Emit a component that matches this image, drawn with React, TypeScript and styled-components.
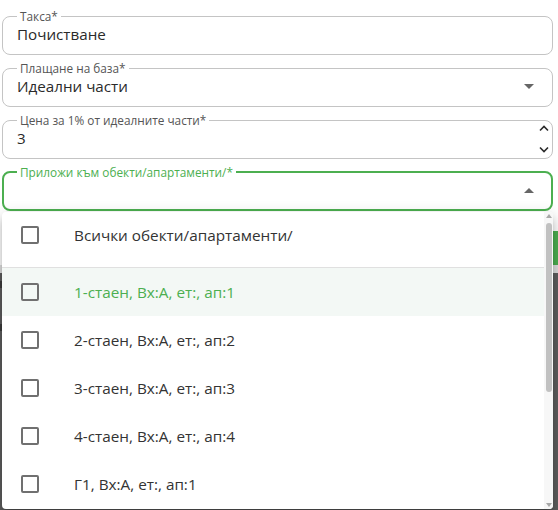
import styled, { createGlobalStyle } from "styled-components";

const GlobalStyle = createGlobalStyle`
  html, body {
    margin: 0;
    padding: 0;
    background: #ffffff;
    font-family: "Open Sans", "Noto Sans", sans-serif;
    overflow: hidden;
  }
`;

const Page = styled.div`
  position: relative;
  width: 558px;
  height: 510px;
  overflow: hidden;
  background: #ffffff;
`;

const Form = styled.div`
  display: flex;
  flex-direction: column;
  gap: 7px;
  padding: 10px 5px 0 2px;
`;

const Field = styled.fieldset<{ $focused?: boolean }>`
  margin: 0;
  padding: 0 ${(p) => (p.$focused ? "13px" : "14px")};
  min-width: 0;
  border: ${(p) => (p.$focused ? "2px solid #4caf50" : "1px solid #c4c4c4")};
  border-radius: 8px;
  height: 45px;
  box-sizing: border-box;
`;

const Legend = styled.legend<{ $focused?: boolean }>`
  padding: 0 3px;
  font-size: 11.8px;
  line-height: 12px;
  color: ${(p) => (p.$focused ? "#4caf50" : "#555555")};
`;

const Control = styled.div`
  display: flex;
  align-items: center;
  height: 26px;
  margin-top: -1px;
`;

const Value = styled.span`
  flex: 1;
  font-size: 15.2px;
  color: #2a2a2a;
  white-space: nowrap;
`;

const Triangle = styled.span<{ $up?: boolean }>`
  width: 0;
  height: 0;
  margin-right: 4px;
  border-left: 5px solid transparent;
  border-right: 5px solid transparent;
  ${(p) =>
    p.$up
      ? "border-bottom: 5px solid #666666;"
      : "border-top: 5px solid #666666;"}
`;

const Spinner = styled.div`
  display: flex;
  flex-direction: column;
  justify-content: space-between;
  height: 30px;
  margin-right: -12px;
  margin-top: 1px;
`;

const Backdrop = styled.div`
  display: flex;
  flex-direction: column;
  margin-top: 20px;
`;

const ButtonRow = styled.div`
  display: flex;
  justify-content: flex-end;
  height: 34px;
`;

const GreenButton = styled.div`
  width: 120px;
  background: #4caf50;
`;

const Separator = styled.div`
  height: 8px;
  background: #dedede;
`;

const DarkArea = styled.div`
  height: 240px;
  background: #5e5e5e;
  display: flex;
  flex-direction: column;
  gap: 36px;
  padding-top: 8px;
`;

const DarkLine = styled.div`
  height: 7px;
  width: 4px;
  background: #3d3d3d;
`;

const Popover = styled.div`
  position: absolute;
  left: 2px;
  top: 212px;
  width: 551px;
  height: 297px;
  display: flex;
  background: #ffffff;
  border-radius: 4px;
  box-shadow: 0 5px 5px -3px rgba(0, 0, 0, 0.2), 0 8px 10px 1px rgba(0, 0, 0, 0.14),
    0 3px 14px 2px rgba(0, 0, 0, 0.12);
  overflow: hidden;
`;

const List = styled.ul`
  flex: 1;
  margin: 0;
  padding: 0;
  list-style: none;
`;

const Option = styled.li<{ $first?: boolean; $active?: boolean }>`
  display: flex;
  align-items: center;
  height: ${(p) => (p.$first ? "46px" : "48px")};
  padding-left: 19px;
  ${(p) => (p.$first ? "padding-bottom: 9px; border-bottom: 1px solid #e0e0e0;" : "")}
  background: ${(p) => (p.$active ? "#f3f8f5" : "transparent")};
  color: ${(p) => (p.$active ? "#4caf50" : "#333333")};
  font-size: 15.3px;
`;

const Checkbox = styled.span`
  width: 18px;
  height: 18px;
  box-sizing: border-box;
  border: 2px solid #707070;
  border-radius: 2px;
  margin-right: 35px;
  flex-shrink: 0;
`;

const ScrollTrack = styled.div`
  width: 9px;
  display: flex;
  flex-direction: column;
  align-items: center;
  background: #f7f7f7;
  padding: 2px 0 2px;
  box-sizing: border-box;
`;

const ScrollArrow = styled.span<{ $down?: boolean }>`
  width: 0;
  height: 0;
  border-left: 3px solid transparent;
  border-right: 3px solid transparent;
  ${(p) =>
    p.$down
      ? "border-top: 4px solid #a8a8a8; margin-top: auto;"
      : "border-bottom: 4px solid #a8a8a8;"}
`;

const ScrollThumb = styled.span`
  width: 6px;
  height: 169px;
  margin-top: 5px;
  border-radius: 3px;
  background: #c1c1c1;
`;

const Chevron = ({ up }: { up?: boolean }) => (
  <svg width="12" height="8" viewBox="0 0 12 8">
    <path
      d={up ? "M2 6.5 L6 2.5 L10 6.5" : "M2 1.5 L6 5.5 L10 1.5"}
      fill="none"
      stroke="#2a2a2a"
      strokeWidth="1.6"
    />
  </svg>
);

const options = [
  "1-стаен, Вх:А, ет:, ап:1",
  "2-стаен, Вх:А, ет:, ап:2",
  "3-стаен, Вх:А, ет:, ап:3",
  "4-стаен, Вх:А, ет:, ап:4",
  "Г1, Вх:А, ет:, ап:1",
];

export default function App() {
  return (
    <Page>
      <GlobalStyle />
      <Form>
        <Field>
          <Legend>Такса*</Legend>
          <Control>
            <Value>Почистване</Value>
          </Control>
        </Field>
        <Field>
          <Legend>Плащане на база*</Legend>
          <Control>
            <Value>Идеални части</Value>
            <Triangle />
          </Control>
        </Field>
        <Field>
          <Legend>Цена за 1% от идеалните части*</Legend>
          <Control>
            <Value>3</Value>
            <Spinner>
              <Chevron up />
              <Chevron />
            </Spinner>
          </Control>
        </Field>
        <Field $focused>
          <Legend $focused>Приложи към обекти/апартаменти/*</Legend>
          <Control>
            <Value />
            <Triangle $up />
          </Control>
        </Field>
      </Form>

      <Backdrop>
        <ButtonRow>
          <GreenButton />
        </ButtonRow>
        <Separator />
        <DarkArea>
          <DarkLine />
          <DarkLine />
        </DarkArea>
      </Backdrop>

      <Popover>
        <List>
          <Option $first>
            <Checkbox />
            Всички обекти/апартаменти/
          </Option>
          {options.map((o, i) => (
            <Option key={o} $active={i === 0}>
              <Checkbox />
              {o}
            </Option>
          ))}
        </List>
        <ScrollTrack>
          <ScrollArrow />
          <ScrollThumb />
          <ScrollArrow $down />
        </ScrollTrack>
      </Popover>
    </Page>
  );
}
